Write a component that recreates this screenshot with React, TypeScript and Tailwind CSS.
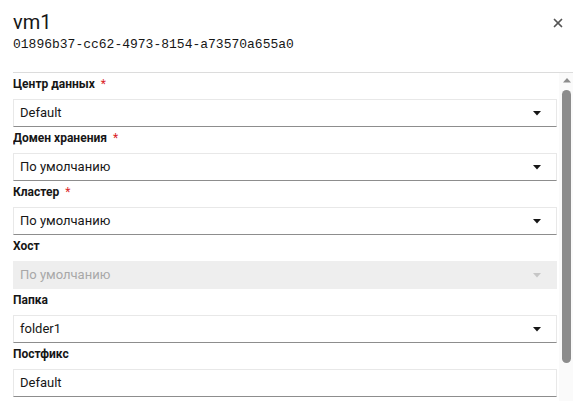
import { X } from "lucide-react";

type Field = {
  label: string;
  value: string;
  required?: boolean;
  disabled?: boolean;
  select?: boolean;
};

const FIELDS: Field[] = [
  { label: "Центр данных", value: "Default", required: true, select: true },
  { label: "Домен хранения", value: "По умолчанию", required: true, select: true },
  { label: "Кластер", value: "По умолчанию", required: true, select: true },
  { label: "Хост", value: "По умолчанию", disabled: true, select: true },
  { label: "Папка", value: "folder1", select: true },
  { label: "Постфикс", value: "Default" },
];

function Caret({ disabled }: { disabled?: boolean }) {
  return (
    <svg width="8" height="5" viewBox="0 0 8 5" className={disabled ? "fill-[#c6c6c6]" : "fill-[#161616]"}>
      <path d="M0 0h8L4 4.5z" />
    </svg>
  );
}

function FieldRow({ f }: { f: Field }) {
  return (
    <div className="flex flex-col">
      <div className="h-4 text-[12px] leading-4 font-bold text-[#161616]">
        {f.label}
        {f.required && <span className="ml-[6px] text-[#da1e28] font-normal">*</span>}
      </div>
      <div
        className={
          f.disabled
            ? "mt-[7px] h-[28px] flex items-center justify-between pl-[7px] pr-[16px] bg-[#eeeeee] text-[#a8a8a8]"
            : "mt-[7px] h-[28px] flex items-center justify-between pl-[6px] pr-[15px] bg-white border border-[#e8e8e8] border-b-[#8d8d8d] text-[#161616]"
        }
      >
        <span className="text-[13px]">{f.value}</span>
        {f.select && <Caret disabled={f.disabled} />}
      </div>
    </div>
  );
}

export default function App() {
  return (
    <div className="h-[401px] w-[581px] overflow-hidden bg-white font-['Roboto',sans-serif]">
      <div className="flex items-start justify-between pl-[13px] pr-[16px] pt-[10px]">
        <div>
          <h1 className="text-[20px] leading-6 text-[#161616]">vm1</h1>
          <div className="mt-[3px] font-['Liberation_Mono',monospace] text-[13px] leading-4 text-[#161616]">
            01896b37-cc62-4973-8154-a73570a655a0
          </div>
        </div>
        <button className="mt-[6px] text-[#555]">
          <X size={14} strokeWidth={3} />
        </button>
      </div>
      <div className="ml-[13px] w-[560px] mt-[19px] border-t border-[#dcdcdc] flex h-[340px]">
        <div className="flex-1 overflow-hidden pr-[2px]">
          <div className="flex flex-col gap-[3px] pt-[3px]">
            {FIELDS.map((f) => (
              <FieldRow key={f.label} f={f} />
            ))}
          </div>
        </div>
        <div className="w-[14px] bg-[#fafafa] flex flex-col items-center pt-[5px] pl-[1px]">
          <svg width="8" height="5" viewBox="0 0 8 5" className="fill-[#8c8c8c]">
            <path d="M4 0L8 4.5H0z" />
          </svg>
          <div className="mt-[7px] w-[9px] h-[273px] rounded-full bg-[#8c8c8c]" />
        </div>
      </div>
    </div>
  );
}
